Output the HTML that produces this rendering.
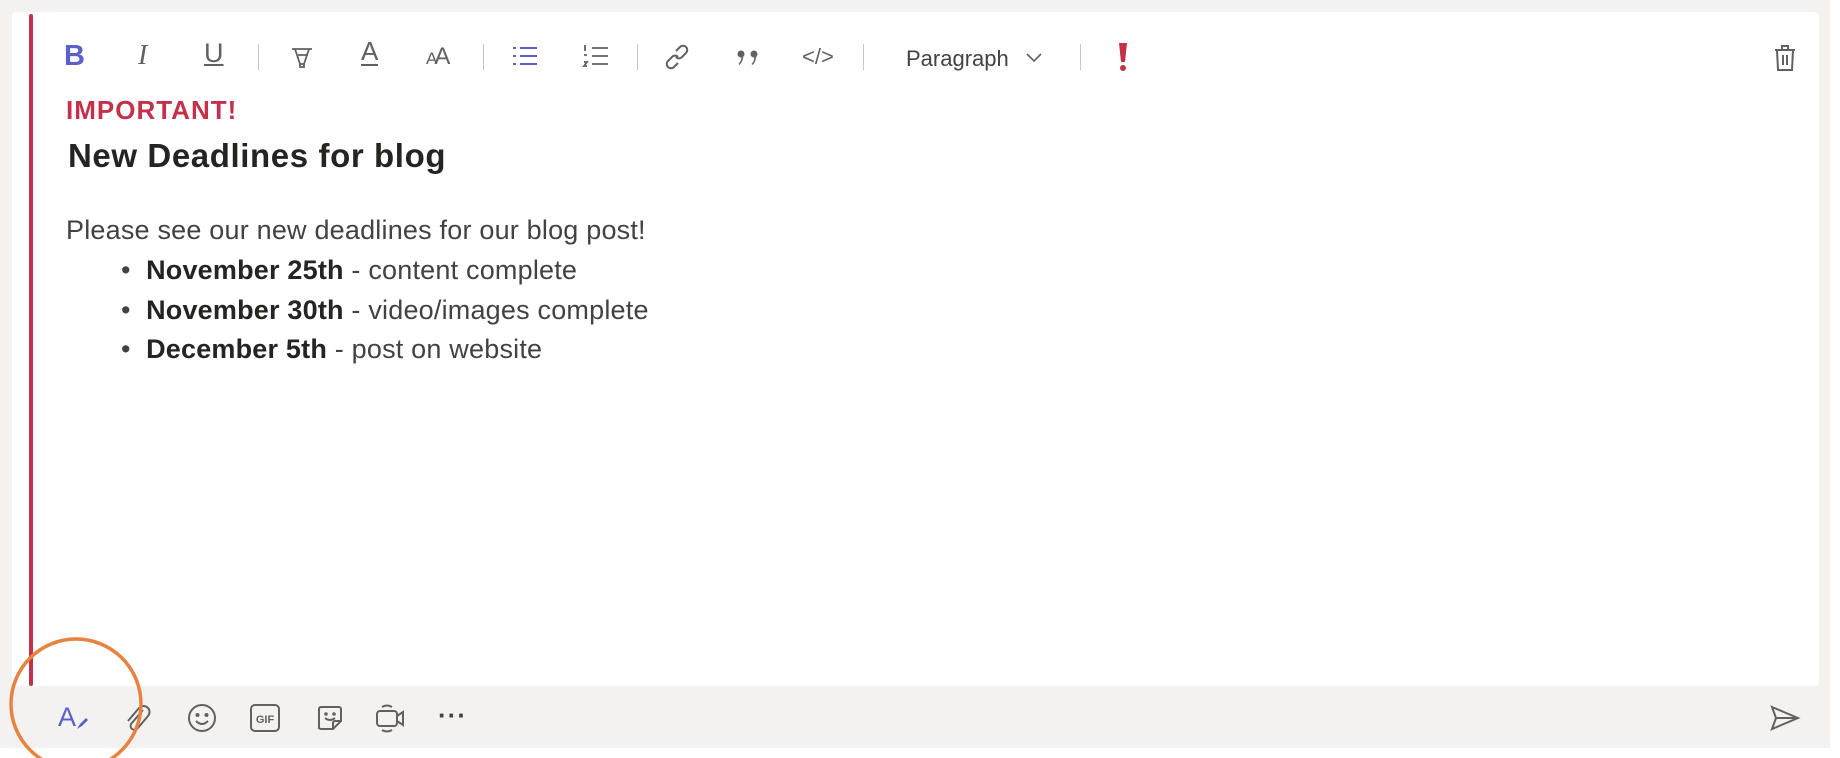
<!DOCTYPE html>
<html><head><meta charset="utf-8"><style>
*{margin:0;padding:0;box-sizing:border-box}
body{width:1840px;height:758px;background:#fff;position:relative;overflow:hidden;font-family:"Liberation Sans",sans-serif;color:#252423}
.bg{position:absolute;left:0;top:0;width:1830px;height:748px;background:#f3f2f1}
.card{position:absolute;left:12px;top:12px;width:1807px;height:674px;background:#fff;border-radius:4px}
.red{position:absolute;left:29px;top:14px;width:4px;height:672px;background:#c4314b;border-radius:2px}
.t{position:absolute;white-space:nowrap}
.ic{position:absolute;transform:translate(-50%,-50%)}
.sep{position:absolute;top:44px;width:1px;height:26px;background:#c8c6c4}
.b{font-size:27px;color:#424242;letter-spacing:0.2px}
</style></head><body>
<div class="bg"></div>
<div class="card"></div>
<div class="red"></div>

<!-- toolbar -->
<div class="t" style="left:64px;top:40px;font-size:29px;font-weight:bold;color:#5b5fc7">B</div>
<div class="t" style="left:138px;top:40px;font-size:28px;font-style:italic;color:#616161;font-family:'Liberation Serif',serif">I</div>
<div class="t" style="left:204px;top:38px;font-size:27px;color:#616161;text-decoration:underline">U</div>
<div class="sep" style="left:258px"></div>
<svg class="ic" style="left:302px;top:57px" width="26" height="26" viewBox="0 0 26 26" fill="none" stroke="#616161" stroke-width="1.8"><path d="M3 5h20M6 5l5 15h4l5-15M9 11h10M11 20v3h4v-3"/></svg>
<div class="t" style="left:361px;top:38px;font-size:26px;color:#616161;border-bottom:2px solid #616161;line-height:26px">A</div>
<div class="t" style="left:426px;top:43px;font-size:24px;color:#616161;letter-spacing:-3px"><span style="font-size:17px">A</span>A</div>
<div class="sep" style="left:483px"></div>
<svg class="ic" style="left:525px;top:56px" width="28" height="24" viewBox="0 0 28 24" stroke="#5b5fc7" stroke-width="2"><path d="M2 4h3M2 12h3M2 20h3M9 4h17M9 12h17M9 20h17"/></svg>
<svg class="ic" style="left:596px;top:56px" width="28" height="26" viewBox="0 0 28 26" stroke="#616161" stroke-width="1.8" fill="none"><path d="M3 2v6M2 12h3M2 19h3l-3 4h3M10 5h16M10 13h16M10 21h16"/></svg>
<div class="sep" style="left:637px"></div>
<svg class="ic" style="left:677px;top:57px" width="28" height="28" viewBox="0 0 28 28" fill="none" stroke="#616161" stroke-width="2"><path d="M13 8l4-4a4 4 0 016 6l-4 4a4 4 0 01-6 0M15 20l-4 4a4 4 0 01-6-6l4-4a4 4 0 016 0"/></svg>
<svg class="ic" style="left:748px;top:58px" width="26" height="18" viewBox="0 0 26 18" fill="#616161"><circle cx="6" cy="5" r="3.5"/><path d="M8.5 5q0 7-4 11l-1-1q3-3 3-8z"/><circle cx="19" cy="5" r="3.5"/><path d="M21.5 5q0 7-4 11l-1-1q3-3 3-8z"/></svg>
<div class="t" style="left:802px;top:44px;font-size:22px;color:#616161">&lt;/&gt;</div>
<div class="sep" style="left:863px"></div>
<div class="t" style="left:906px;top:46px;font-size:22px;color:#424242">Paragraph</div>
<svg class="ic" style="left:1034px;top:58px" width="18" height="12" viewBox="0 0 18 12" fill="none" stroke="#616161" stroke-width="1.6"><path d="M2 2l7 7 7-7"/></svg>
<div class="sep" style="left:1080px"></div>
<svg class="ic" style="left:1123px;top:57px" width="10" height="30" viewBox="0 0 10 30" fill="#c4314b"><path d="M1 1h8l-2 19H3z"/><circle cx="5" cy="26" r="3"/></svg>
<svg class="ic" style="left:1785px;top:58px" width="24" height="30" viewBox="0 0 24 30" fill="none" stroke="#616161" stroke-width="2"><path d="M2 7h20M9 7V3h6v4M4 7l1 20h14l1-20M10 12v10M14 12v10"/></svg>

<!-- content -->
<div class="t" style="left:66px;top:95px;font-size:26px;font-weight:bold;color:#c4314b;letter-spacing:1px">IMPORTANT!</div>
<div class="t" style="left:68px;top:137px;font-size:33px;font-weight:bold;color:#252423;letter-spacing:0.6px">New Deadlines for blog</div>
<div class="t b" style="left:66px;top:215px">Please see our new deadlines for our blog post!</div>
<div class="t b" style="left:121px;top:255px">•&nbsp;&nbsp;<b style="color:#252423">November 25th</b> - content complete</div>
<div class="t b" style="left:121px;top:295px">•&nbsp;&nbsp;<b style="color:#252423">November 30th</b> - video/images complete</div>
<div class="t b" style="left:121px;top:334px">•&nbsp;&nbsp;<b style="color:#252423">December 5th</b> - post on website</div>

<!-- bottom bar -->
<div class="t" style="left:58px;top:702px;font-size:27px;color:#5b5fc7">A</div>
<svg class="ic" style="left:82px;top:724px" width="14" height="14" viewBox="0 0 14 14"><path d="M2 12l3-5 6-6 2 2-6 6z" fill="#5b5fc7"/></svg>
<svg class="ic" style="left:137px;top:718px" width="28" height="32" viewBox="0 0 28 32" fill="none" stroke="#616161" stroke-width="2"><path d="M20 8L8 22a4 4 0 006 5l11-13a6 6 0 00-9-8L5 19"/></svg>
<svg class="ic" style="left:202px;top:718px" width="32" height="32" viewBox="0 0 32 32" fill="none" stroke="#616161" stroke-width="2"><circle cx="16" cy="16" r="13"/><circle cx="11.5" cy="13" r="1" fill="#616161"/><circle cx="20.5" cy="13" r="1" fill="#616161"/><path d="M10 19q6 6 12 0"/></svg>
<svg class="ic" style="left:265px;top:718px" width="32" height="30" viewBox="0 0 32 30" fill="none" stroke="#616161" stroke-width="2"><rect x="2" y="2" width="28" height="26" rx="4"/><text x="16" y="20" font-size="11" font-weight="bold" text-anchor="middle" fill="#616161" stroke="none" font-family="Liberation Sans">GIF</text></svg>
<svg class="ic" style="left:330px;top:718px" width="30" height="30" viewBox="0 0 30 30" fill="none" stroke="#616161" stroke-width="2"><path d="M4 26V6a2 2 0 012-2h18a2 2 0 012 2v12l-8 8H6a2 2 0 01-2-2zM18 26v-6a2 2 0 012-2h6"/><path d="M10 15q5 4 10 0"/><circle cx="11" cy="11" r="0.8"/><circle cx="19" cy="11" r="0.8"/></svg>
<svg class="ic" style="left:391px;top:718px" width="34" height="32" viewBox="0 0 34 32" fill="none" stroke="#616161" stroke-width="2"><rect x="3" y="9" width="20" height="15" rx="3"/><path d="M23 14l6-4v13l-6-4M8 5q5-3 10 0M8 28q5 3 10 0"/></svg>
<div class="t" style="left:438px;top:700px;font-size:26px;font-weight:bold;color:#424242;letter-spacing:1px">···</div>
<svg class="ic" style="left:1785px;top:718px" width="32" height="28" viewBox="0 0 32 28" fill="none" stroke="#616161" stroke-width="2"><path d="M3 3l26 11L3 25l4-11zM7 14h22"/></svg>

<!-- orange circle -->
<svg style="position:absolute;left:0;top:630px" width="160" height="128" viewBox="0 0 160 128"><circle cx="76" cy="74" r="65" fill="none" stroke="#e8823f" stroke-width="3.5"/></svg>
</body></html>
